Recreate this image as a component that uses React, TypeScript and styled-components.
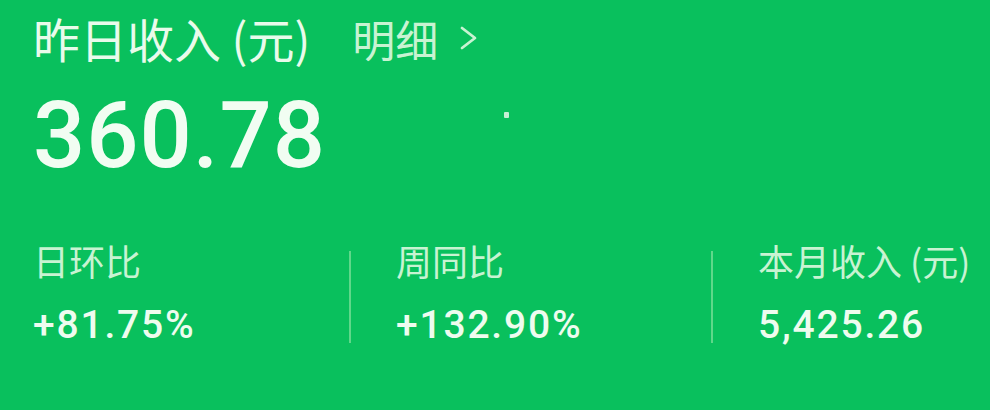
import styled, { createGlobalStyle } from 'styled-components'

const GlobalStyle = createGlobalStyle`
  html, body {
    margin: 0;
    padding: 0;
    background: #09c05d;
  }
  body {
    font-family: Roboto, "Noto Sans CJK SC", sans-serif;
  }
`

const Card = styled.div`
  position: relative;
  width: 990px;
  height: 410px;
  box-sizing: border-box;
  padding: 14px 0 0 33px;
  background: #09c05d;
  overflow: hidden;
`

const Header = styled.div`
  display: flex;
  align-items: center;
  gap: 42px;
  height: 48px;
`

const Title = styled.div`
  font-family: "Noto Sans CJK SC", sans-serif;
  font-size: 47px;
  line-height: 48px;
  color: #e9fbeb;
  white-space: nowrap;
`

const DetailLink = styled.a`
  display: flex;
  align-items: center;
  gap: 20px;
  font-family: "Noto Sans CJK SC", sans-serif;
  font-size: 43px;
  line-height: 48px;
  color: #c8f3d2;
  text-decoration: none;
  cursor: pointer;
`

const Amount = styled.div`
  margin-top: 28px;
  font-family: Roboto, sans-serif;
  font-size: 92px;
  font-weight: 500;
  line-height: 92px;
  letter-spacing: 1px;
  color: #f1fdf2;
`

const Stats = styled.div`
  display: grid;
  grid-template-columns: 316px 362px 1fr;
  margin-top: 69px;
`

const Stat = styled.div<{ $divider?: boolean }>`
  display: flex;
  flex-direction: column;
  justify-content: space-between;
  height: 92px;
  padding-left: ${(p) => (p.$divider ? '45px' : '0')};
  border-left: ${(p) => (p.$divider ? '2px solid #5fd88a' : 'none')};
`

const StatLabel = styled.div`
  font-family: "Noto Sans CJK SC", sans-serif;
  font-size: 36px;
  line-height: 40px;
  margin-top: -11px;
  color: #c8f3d2;
  white-space: nowrap;
`

const StatValue = styled.div`
  font-family: Roboto, sans-serif;
  font-size: 39px;
  font-weight: 500;
  line-height: 40px;
  letter-spacing: 1.8px;
  margin-bottom: -2px;
  color: #eefcef;
  white-space: nowrap;
`

const Speck = styled.div`
  position: absolute;
  left: 504px;
  top: 112px;
  width: 5px;
  height: 6px;
  border-radius: 1px;
  background: #e8f8ea;
  opacity: 0.85;
`

function Chevron() {
  return (
    <svg width="20" height="26" viewBox="0 0 20 26" fill="none">
      <polyline points="4,3 17,13 4,23" stroke="#c8f3d2" strokeWidth="2.8" strokeLinecap="round" strokeLinejoin="round" />
    </svg>
  )
}

const stats = [
  { label: '日环比', value: '+81.75%' },
  { label: '周同比', value: '+132.90%' },
  { label: '本月收入 (元)', value: '5,425.26' },
]

export default function App() {
  return (
    <>
      <GlobalStyle />
      <Card>
        <Header>
          <Title>昨日收入 (元)</Title>
          <DetailLink>
            明细
            <Chevron />
          </DetailLink>
        </Header>
        <Amount>360.78</Amount>
        <Stats>
          {stats.map((s, i) => (
            <Stat key={s.label} $divider={i > 0}>
              <StatLabel>{s.label}</StatLabel>
              <StatValue>{s.value}</StatValue>
            </Stat>
          ))}
        </Stats>
        <Speck />
      </Card>
    </>
  )
}
